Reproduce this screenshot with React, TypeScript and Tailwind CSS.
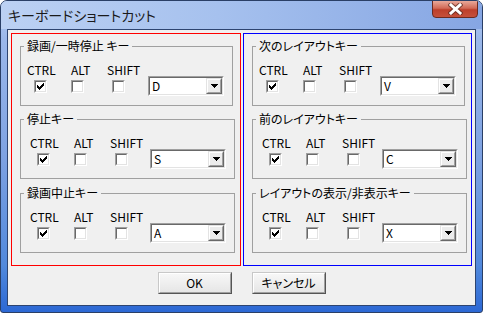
import React from "react";

const FONT = "font-['Noto_Sans_CJK_JP','Noto_Sans',sans-serif]";

function CheckBox({ checked }: { checked?: boolean }) {
  return (
    <div className="w-[13px] h-[13px] border border-t-[#a0a0a0] border-l-[#a0a0a0] border-b-white border-r-white">
      <div className="w-full h-full border border-t-[#696969] border-l-[#696969] border-b-[#e3e3e3] border-r-[#e3e3e3] bg-white relative">
        {checked && (
          <svg width="7" height="7" viewBox="0 0 7 7" shapeRendering="crispEdges" className="absolute left-[1px] top-[1px]">
            <rect x="6" y="0" width="1" height="1" fill="#000" />
            <rect x="5" y="1" width="2" height="1" fill="#000" />
            <rect x="0" y="2" width="1" height="1" fill="#000" />
            <rect x="4" y="2" width="3" height="1" fill="#000" />
            <rect x="0" y="3" width="2" height="1" fill="#000" />
            <rect x="3" y="3" width="3" height="1" fill="#000" />
            <rect x="0" y="4" width="5" height="1" fill="#000" />
            <rect x="1" y="5" width="3" height="1" fill="#000" />
            <rect x="2" y="6" width="1" height="1" fill="#000" />
          </svg>
        )}
      </div>
    </div>
  );
}

function Combo({ value }: { value: string }) {
  return (
    <div className="w-[76px] h-[20px] border border-t-[#a0a0a0] border-l-[#a0a0a0] border-b-white border-r-white">
      <div className="h-full border border-t-[#696969] border-l-[#696969] border-b-[#e3e3e3] border-r-[#e3e3e3] bg-white flex items-center">
        <span className="flex-1 pl-[2px] text-[12px] leading-[16px] text-black">{value}</span>
        <div className="w-[16px] h-[16px] border border-t-[#e3e3e3] border-l-[#e3e3e3] border-b-[#696969] border-r-[#696969]">
          <div className="w-full h-full border border-t-white border-l-white border-b-[#a0a0a0] border-r-[#a0a0a0] bg-[#ececec] flex items-center justify-center">
            <svg width="7" height="4" viewBox="0 0 7 4" shapeRendering="crispEdges">
              <polygon points="0,0 7,0 3.5,4" fill="#000" />
            </svg>
          </div>
        </div>
      </div>
    </div>
  );
}

function Col({ label, w, cbMl, checked }: { label: string; w: string; cbMl: string; checked?: boolean }) {
  return (
    <div className={`flex flex-col ${w}`}>
      <span className="mt-[10px] text-[12px] leading-[14px] text-black">{label}</span>
      <div className={`mt-[3px] ${cbMl}`}>
        <CheckBox checked={checked} />
      </div>
    </div>
  );
}

function Group({ title, keyName, shifted, className }: { title: string; keyName: string; shifted?: boolean; className?: string }) {
  return (
    <fieldset className={`w-[213px] h-[67px] border border-[#a0a0a0] p-0 m-0 ${className ?? ""}`}>
      <legend className="ml-[3px] px-[3px] text-[12px] leading-[14px] text-black [font-feature-settings:'palt']">{title}</legend>
      <div className="flex">
        <div className={`flex ${shifted ? "pl-[9px]" : "pl-[6px]"}`}>
          <Col label="CTRL" w="w-[44px]" cbMl="ml-[7px]" checked />
          <Col label="ALT" w="w-[36px]" cbMl="ml-0" />
          <Col label="SHIFT" w="w-[40px]" cbMl="ml-[5px]" />
        </div>
        <div className="ml-auto mr-[8px] mt-[23px]">
          <Combo value={keyName} />
        </div>
      </div>
    </fieldset>
  );
}

function Button({ children }: { children: React.ReactNode }) {
  return (
    <div className="w-[74px] h-[22px] border border-t-[#c8c8c8] border-l-[#c8c8c8] border-b-[#555] border-r-[#555]">
      <div className="w-full h-full border border-t-white border-l-white border-b-[#a0a0a0] border-r-[#a0a0a0] bg-[linear-gradient(180deg,#f7f7f7,#e6e6e6)] flex items-center justify-center text-[12px] leading-none text-black [font-feature-settings:'palt']">
        {children}
      </div>
    </div>
  );
}

export default function App() {
  return (
    <div className={`${FONT} w-[483px] h-[313px] flex flex-col border border-[#2a3f66] rounded-t-[7px] rounded-b-[3px] overflow-hidden bg-[linear-gradient(180deg,#b8cff2_0%,#9bb8ea_12%,#7ea2e2_50%,#5189dc_85%,#2c68d4_100%)]`}>
      <div className="h-[28px] flex items-start pl-[7px] pr-[4px] bg-[linear-gradient(90deg,#bcd1f3_0%,#a6c1ee_45%,#86a6e3_100%)]">
        <span className="mt-[5px] text-[14px] leading-[18px] text-[#1a1a1a] [font-feature-settings:'palt']">キーボードショートカット</span>
        <div className="ml-auto w-[46px] h-[18px] -mt-px rounded-b-[4px] border border-[#6b2a20] bg-[linear-gradient(180deg,#e9a99a_0%,#d26a57_45%,#bd3f2b_55%,#c5503b_100%)] flex items-center justify-center">
          <svg width="15" height="12" viewBox="0 0 15 12">
            <path d="M3 2 L12 10 M12 2 L3 10" stroke="#5a2a22" strokeWidth="5" strokeLinecap="square" opacity="0.7" />
            <path d="M3 2 L12 10 M12 2 L3 10" stroke="#ffffff" strokeWidth="3" strokeLinecap="square" />
          </svg>
        </div>
      </div>
      <div className="flex-1 mx-[6px] mb-[6px] border border-[#2d4470] bg-[#f0f0f0] flex flex-col pt-[3px] pl-[3px]">
        <div className="flex">
          <div className="w-[230px] h-[233px] bg-[#ff0000] p-px">
            <div className="w-full h-full bg-[#f0f0f0] pl-[8px] pt-[5px] flex flex-col">
              <Group title="録画/一時停止 キー" keyName="D" />
              <Group title="停止キー" keyName="S" shifted className="mt-[6px]" />
              <Group title="録画中止キー" keyName="A" shifted className="mt-[7px]" />
            </div>
          </div>
          <div className="ml-[2px] w-[229px] h-[233px] bg-[#0000ff] p-px">
            <div className="w-full h-full bg-[#f0f0f0] pl-[8px] pt-[5px] flex flex-col">
              <Group title="次のレイアウトキー" keyName="V" />
              <Group title="前のレイアウトキー" keyName="C" shifted className="mt-[6px]" />
              <Group title="レイアウトの表示/非表示キー" keyName="X" shifted className="mt-[7px]" />
            </div>
          </div>
        </div>
        <div className="mt-[6px] flex justify-center gap-[20px] pr-[3px]">
          <Button>OK</Button>
          <Button>キャンセル</Button>
        </div>
      </div>
    </div>
  );
}
